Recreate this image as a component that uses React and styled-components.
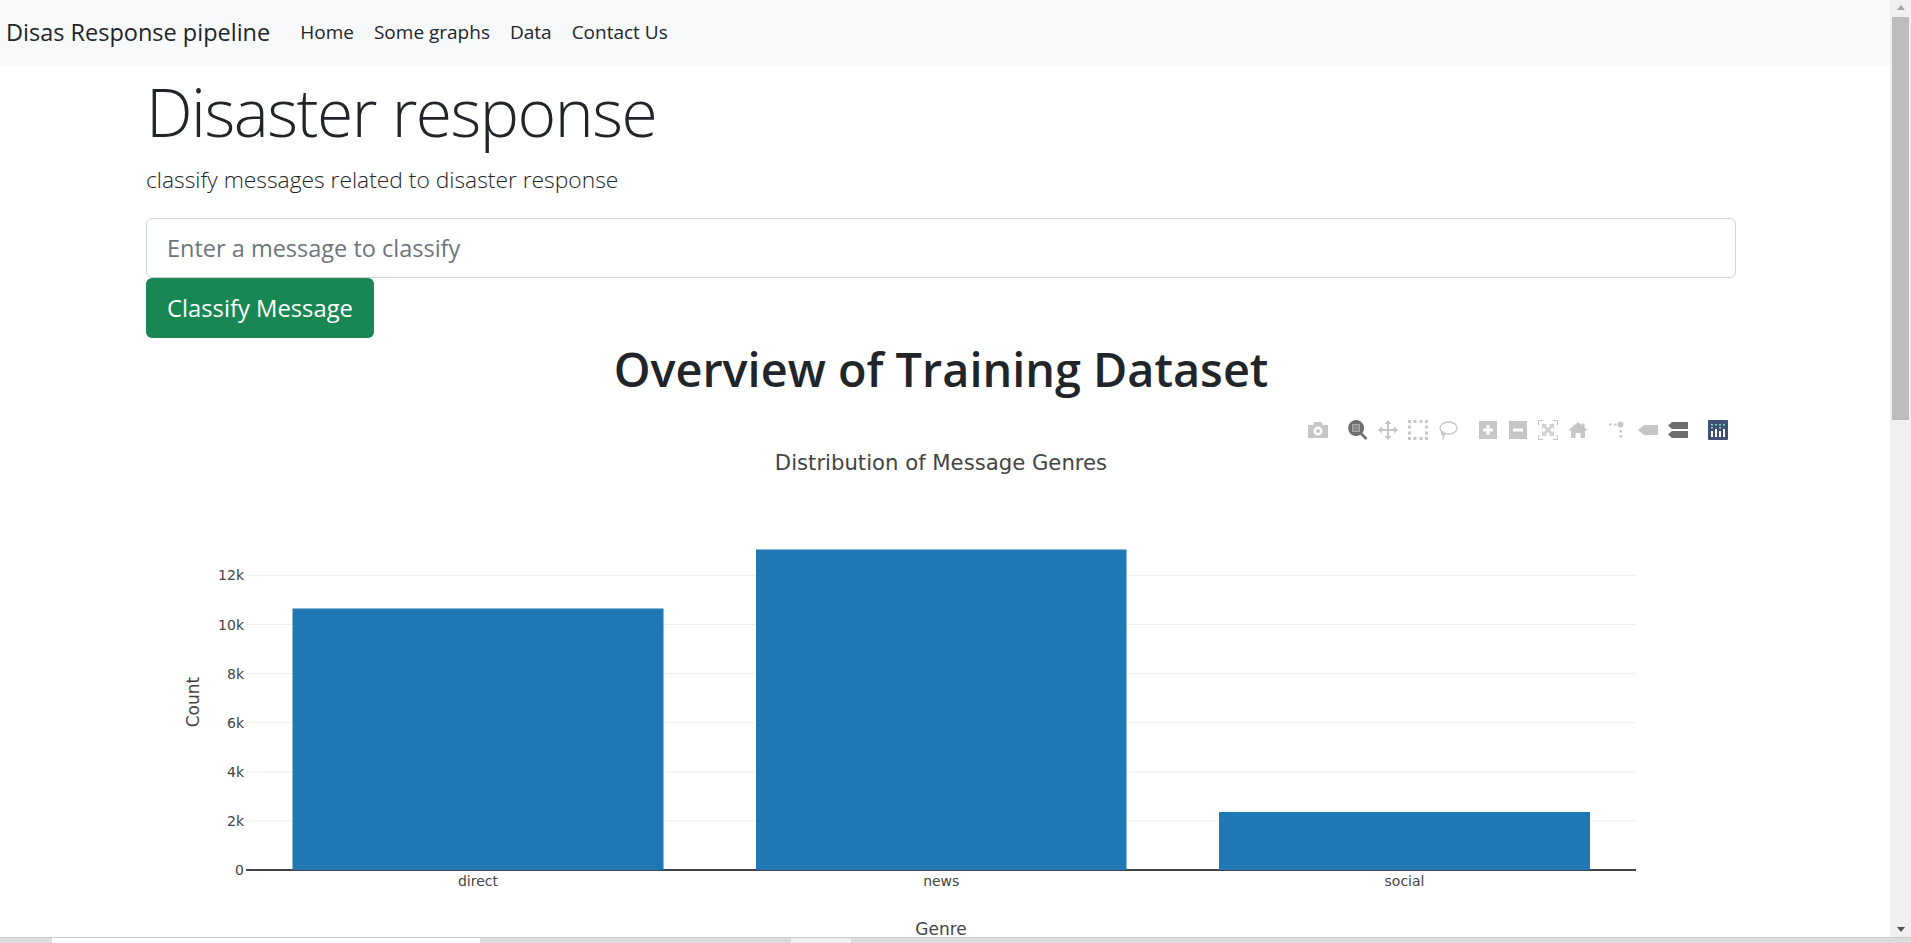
import React from "react";
import styled, { createGlobalStyle } from "styled-components";

const GlobalStyle = createGlobalStyle`
  html, body { margin: 0; padding: 0; height: 100%; overflow: hidden; background: #fff; }
  body { font-family: "Open Sans", "Noto Sans", sans-serif; color: #212529; }
  * { box-sizing: border-box; }
`;

const Screen = styled.div`
  display: grid;
  grid-template-columns: 1fr 21px;
  grid-template-rows: 1fr 6px;
  width: 100vw;
  height: 100vh;
`;
const Page = styled.div`
  min-width: 0;
  overflow: hidden;
`;
const Navbar = styled.nav`
  display: flex;
  align-items: center;
  height: 66px;
  padding: 0 6px 2px;
  background: #f8f9fa;
`;
const Brand = styled.a`
  font-size: 23.5px;
  margin-right: 20px;
  color: #212529;
`;
const NavLink = styled.a`
  font-size: 19px;
  padding: 0 10px;
  color: #212529;
`;
const Container = styled.main`
  width: 1590px;
  margin-left: 146px;
`;
const Title = styled.h1`
  margin: 0;
  font-size: 66px;
  font-weight: 300;
  line-height: 90px;
  letter-spacing: -1.5px;
`;
const Lead = styled.p`
  margin: 9px 0 0;
  font-size: 22.8px;
  font-weight: 300;
  line-height: 30px;
  color: #212529;
`;
const MessageInput = styled.input`
  display: block;
  width: 100%;
  height: 60px;
  margin-top: 23px;
  padding: 0 20px 0;
  border: 1px solid #ced4da;
  border-radius: 6px;
  font: inherit;
  font-size: 23.5px;
  &::placeholder { color: #6c757d; opacity: 1; }
`;
const ClassifyButton = styled.button`
  display: block;
  height: 60px;
  padding: 0 21px;
  border: 0;
  border-radius: 6px;
  background: #198754;
  color: #fff;
  font: inherit;
  font-size: 23.8px;
`;
const SectionTitle = styled.h2`
  margin: 0;
  height: 67px;
  font-size: 46.8px;
  font-weight: 600;
  line-height: 63px;
  text-align: center;
  color: #212529;
`;
const ChartBox = styled.section`
  position: relative;
  height: 532px;
`;
const ChartSvg = styled.svg`
  display: block;
  width: 100%;
  height: 100%;
`;
const ModeBar = styled.div`
  position: absolute;
  top: 15px;
  right: 8px;
  display: flex;
  align-items: center;
`;
const ModeGroup = styled.div`
  display: flex;
  gap: 10px;
  margin-left: ${(p) => p.$gap}px;
`;
const ModeIcon = styled.svg`
  display: block;
  width: 20px;
  height: 20px;
  color: ${(p) => (p.$active ? "#6e6e6e" : "#c6c6c6")};
`;
const ScrollTrack = styled.div`
  display: flex;
  flex-direction: column;
  align-items: center;
  justify-content: space-between;
  background: #f0f0f0;
  position: relative;
`;
const ScrollThumb = styled.div`
  position: absolute;
  top: 17px;
  left: 2px;
  width: 17px;
  height: 403px;
  background: #bdbdbd;
`;
const ArrowUp = styled.div`
  margin-top: 5px;
  border: 4.5px solid transparent;
  border-top: 0;
  border-bottom: 5px solid #a3a3a3;
`;
const ArrowDown = styled.div`
  margin-bottom: 5px;
  border: 4.5px solid transparent;
  border-bottom: 0;
  border-top: 5px solid #505050;
`;
const BottomStrip = styled.div`
  grid-column: 1 / span 2;
  display: flex;
  background: #dcdcdc;
  border-top: 1px solid #cfcfcf;
`;
const StripTab = styled.div`
  width: ${(p) => p.$w}px;
  margin-left: ${(p) => p.$left}px;
  background: ${(p) => p.$bg};
`;

const ticks = [0, 2, 4, 6, 8, 10, 12];
const bars = [
  { label: "direct", x: 292.5, w: 371, top: 608.5 },
  { label: "news", x: 756, w: 370.5, top: 549.5 },
  { label: "social", x: 1219, w: 371, top: 812 },
];
const tickY = (k) => 870 - k * 24.55;

const Chart = () => (
  <ChartSvg viewBox="146 405 1590 532">
    <text x="941" y="470" textAnchor="middle" fontFamily="DejaVu Sans" fontSize="21.2" fill="#444">
      Distribution of Message Genres
    </text>
    {ticks.slice(1).map((k) => (
      <line key={k} x1="246" x2="1636" y1={tickY(k)} y2={tickY(k)} stroke="#eee" strokeWidth="1" />
    ))}
    <line x1="246" x2="1636" y1="870" y2="870" stroke="#444" strokeWidth="2" />
    {bars.map((b) => (
      <rect key={b.label} x={b.x} y={b.top} width={b.w} height={870 - b.top} fill="#1f77b4" />
    ))}
    {ticks.map((k) => (
      <text key={k} x="244" y={tickY(k) + 5} textAnchor="end" fontFamily="DejaVu Sans" fontSize="14" fill="#444">
        {k === 0 ? "0" : `${k}k`}
      </text>
    ))}
    {bars.map((b) => (
      <text key={b.label} x={b.x + b.w / 2} y="886" textAnchor="middle" fontFamily="DejaVu Sans" fontSize="14" fill="#444">
        {b.label}
      </text>
    ))}
    <text x="941" y="935" textAnchor="middle" fontFamily="DejaVu Sans" fontSize="17" fill="#444">
      Genre
    </text>
    <text transform="translate(199 702) rotate(-90)" textAnchor="middle" fontFamily="DejaVu Sans" fontSize="17" fill="#444">
      Count
    </text>
  </ChartSvg>
);

const Icon = ({ active, children }) => (
  <ModeIcon viewBox="0 0 20 20" $active={active} fill="currentColor">
    {children}
  </ModeIcon>
);

const Toolbar = () => (
  <ModeBar>
    <ModeGroup $gap={0}>
      <Icon>
        <path fillRule="evenodd" d="M0 5h5l1.500-3h7L15 5h5v13H0zM10 6.500a4.500 4.500 0 1 0 0 9 4.500 4.500 0 0 0 0-9zM10 9a2 2 0 1 1 0 4 2 2 0 0 1 0-4z" />
      </Icon>
    </ModeGroup>
    <ModeGroup $gap={20}>
      <Icon active>
        <path d="M8 0a8 8 0 0 1 6.300 12.900l5.200 5.200-1.900 1.900-5.200-5.200A8 8 0 1 1 8 0z" />
        <rect x="4.500" y="4.500" width="7" height="7" fill="#8a8a8a" stroke="#a9a9a9" strokeWidth="1" />
      </Icon>
      <Icon>
        <path d="M10 0l3.500 4H11v5h5V6.500l4 3.500-4 3.500V11h-5v5h2.500L10 20l-3.500-4H9v-5H4v2.500L0 10l4-3.500V9h5V4H6.500z" />
      </Icon>
      <Icon>
        <path d="M0 0h3v3H0zM5.500 0h3v3h-3zM11.500 0h3v3h-3zM17 0h3v3h-3zM0 5.500h3v3H0zM0 11.500h3v3H0zM0 17h3v3H0zM5.500 17h3v3h-3zM11.500 17h3v3h-3zM17 17h3v3h-3zM17 5.500h3v3h-3zM17 11.500h3v3h-3z" />
      </Icon>
      <Icon>
        <g fill="none" stroke="currentColor" strokeWidth="1.400">
          <ellipse cx="10.500" cy="8" rx="8.500" ry="6" />
          <path d="M3.500 12c0 2.500 2.500 2 2.500 3.500 0 1.500-1 3-1.500 4" />
          <circle cx="5" cy="13.500" r="1.500" />
        </g>
      </Icon>
    </ModeGroup>
    <ModeGroup $gap={20}>
      <Icon>
        <path fillRule="evenodd" d="M1 1h18v18H1zM8.500 5v3.500H5v3h3.500V15h3v-3.500H15v-3h-3.500V5z" />
      </Icon>
      <Icon>
        <path fillRule="evenodd" d="M1 1h18v18H1zM5 8.500v3h10v-3z" />
      </Icon>
      <Icon>
        <g fill="none" stroke="currentColor" strokeWidth="1">
          <path d="M.5 5V.5H5M15 .5h4.500V5M19.500 15v4.500H15M5 19.500H.5V15" />
        </g>
        <path opacity="0.8" d="M4 4h5L7.500 5.500 10 8l2.500-2.500L11 4h5v5l-1.500-1.500L12 10l2.500 2.500L16 11v5h-5l1.500-1.500L10 12l-2.500 2.500L9 16H4v-5l1.500 1.500L8 10 5.500 7.500 4 9z" />
      </Icon>
      <Icon>
        <path d="M10 2l4 3.300V3.500h2.500v3.900L20 10.500h-3V18h-4.500v-5h-5v5H3v-7.500H0z" />
      </Icon>
    </ModeGroup>
    <ModeGroup $gap={20}>
      <Icon>
        <circle cx="12.500" cy="4.500" r="3" />
        <path d="M1 3.500h2.500v2H1zM6 3.500h2.500v2H6zM11.500 10h2.500v2.500h-2.500zM11.500 15h2.500v2.500h-2.500z" />
      </Icon>
      <Icon>
        <path d="M0 10l6-5h14v10H6z" />
      </Icon>
      <Icon active>
        <path d="M0 5.500l4-3.500h16v7H4zM0 14.500l4-3.500h16v7H4z" />
      </Icon>
    </ModeGroup>
    <ModeGroup $gap={20}>
      <svg width="20" height="20" viewBox="0 0 20 20">
        <rect width="20" height="20" rx="1" fill="#3f4f75" />
        <g fill="#fff">
          <rect x="3" y="11" width="2" height="6" />
          <rect x="7" y="9" width="2" height="8" />
          <rect x="11" y="11" width="2" height="6" />
          <rect x="15" y="9" width="2" height="8" />
        </g>
        <g fill="#6fd8c8">
          <rect x="3" y="4" width="2" height="1.500" />
          <rect x="7" y="4" width="2" height="1.500" />
          <rect x="11" y="4" width="2" height="1.500" />
          <rect x="15" y="4" width="2" height="1.500" />
          <rect x="3" y="7" width="2" height="1.500" />
          <rect x="11" y="7" width="2" height="1.500" />
        </g>
      </svg>
    </ModeGroup>
  </ModeBar>
);

export default function App() {
  return (
    <>
      <GlobalStyle />
      <Screen>
        <Page>
          <Navbar>
            <Brand>Disas Response pipeline</Brand>
            <NavLink>Home</NavLink>
            <NavLink>Some graphs</NavLink>
            <NavLink>Data</NavLink>
            <NavLink>Contact Us</NavLink>
          </Navbar>
          <Container>
            <Title>Disaster response</Title>
            <Lead>classify messages related to disaster response</Lead>
            <MessageInput placeholder="Enter a message to classify" />
            <ClassifyButton>Classify Message</ClassifyButton>
            <SectionTitle>Overview of Training Dataset</SectionTitle>
            <ChartBox>
              <Chart />
              <Toolbar />
            </ChartBox>
          </Container>
        </Page>
        <ScrollTrack>
          <ArrowUp />
          <ScrollThumb />
          <ArrowDown />
        </ScrollTrack>
        <BottomStrip>
          <StripTab $left={52} $w={428} $bg="#fff" />
          <StripTab $left={311} $w={60} $bg="#efefef" />
        </BottomStrip>
      </Screen>
    </>
  );
}
